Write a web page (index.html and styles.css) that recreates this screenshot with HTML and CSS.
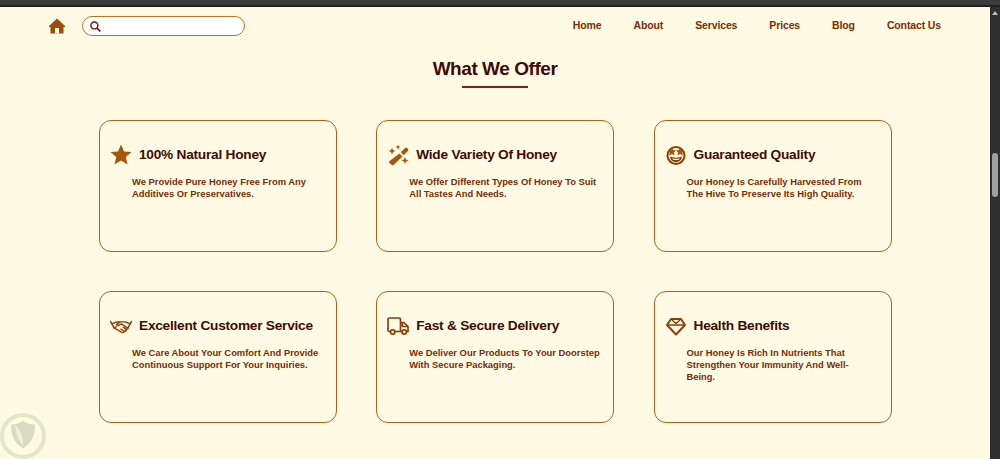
FILE: index.html
```html
<!DOCTYPE html>
<html lang="en">
<head>
    <meta charset="UTF-8">
    <meta name="viewport" content="width=device-width, initial-scale=1.0">
    <title>What We Offer</title>
    <link rel="stylesheet" href="styles.css">
</head>
<body>

    <div class="top-strip"></div>

    <div class="window">
        <div class="page">

            <!-- Navigation -->
            <nav class="navbar">
                <div class="nav-left">
                    <svg class="home-icon" viewBox="0 0 16 16" width="16" height="16">
                        <path fill="#9c4f0c" d="M8 .5 16 8v1h-1.500v6.500h-13V9H0V8L8 .5Z"/>
                        <rect x="6" y="10" width="4" height="5.500" fill="#fffae3"/>
                    </svg>
                    <div class="search-box">
                        <svg viewBox="0 0 12 12" width="11" height="11">
                            <circle cx="4.800" cy="4.800" r="3.800" fill="none" stroke="#7a1500" stroke-width="1.600"/>
                            <path d="M7.700 7.700 11.300 11.300" stroke="#7a1500" stroke-width="1.800"/>
                        </svg>
                    </div>
                </div>
                <ul class="nav-links">
                    <li><a href="#">Home</a></li>
                    <li><a href="#">About</a></li>
                    <li><a href="#">Services</a></li>
                    <li><a href="#">Prices</a></li>
                    <li><a href="#">Blog</a></li>
                    <li><a href="#">Contact Us</a></li>
                </ul>
            </nav>

            <h1 class="section-title">What We Offer</h1>
            <div class="title-line"></div>

            <!-- Offer cards -->
            <section class="offer-grid">
                <div class="offer-card">
                    <div class="offer-head">
                        <svg class="offer-icon" viewBox="0 0 22 22">
                            <path fill="#a6560f" d="M11 .5l3 6.900 7.500.7-5.700 4.900 1.700 7.500L11 16.600 4.500 20.500l1.700-7.500L.5 8.100 8 7.400 11 .5Z"/>
                        </svg>
                        <h3>100% Natural Honey</h3>
                    </div>
                    <p>We Provide Pure Honey Free From Any Additives Or Preservatives.</p>
                </div>

                <div class="offer-card">
                    <div class="offer-head">
                        <svg class="offer-icon" viewBox="0 0 22 22">
                            <path fill="#a6560f" d="M12.500 9.500l3 3-8.700 8.300a1.500 1.500 0 0 1-2.100 0L2.500 19a1.500 1.500 0 0 1 0-2.100l10-7.400Z"/>
                            <path fill="#a6560f" d="M13.800 8.300l4.300-4.200a1.500 1.500 0 0 1 2.100 0l.7.700a1.500 1.500 0 0 1 0 2.100l-4.200 4.300-2.900-2.900Z"/>
                            <path fill="#a6560f" d="M5 3.500l1 2.500 2.500 1-2.500 1L5 10.500 4 8 1.500 7l2.500-1 1-2.500ZM18 13l1 2.500 2.500 1-2.500 1-1 2.500-1-2.500-2.500-1 2.500-1 1-2.500ZM11 .5l.7 1.800 1.800.7-1.800.7-.7 1.800-.7-1.800L8.500 3l1.800-.7.700-1.800Z"/>
                        </svg>
                        <h3>Wide Variety Of Honey</h3>
                    </div>
                    <p>We Offer Different Types Of Honey To Suit All Tastes And Needs.</p>
                </div>

                <div class="offer-card">
                    <div class="offer-head">
                        <svg class="offer-icon" viewBox="0 0 22 22">
                            <circle cx="11" cy="11.500" r="8.500" fill="none" stroke="#8a3f0a" stroke-width="2"/>
                            <path fill="#a6560f" d="M6.800 3.500l1.400 2.600 2.800.4-2 2 .5 2.900-2.700-1.300-2.700 1.300.5-2.900-2-2 2.800-.4 1.400-2.600ZM15.200 3.500l1.400 2.600 2.800.4-2 2 .5 2.900-2.700-1.300-2.700 1.300.5-2.900-2-2 2.800-.4 1.400-2.600Z"/>
                            <path fill="#8a3f0a" d="M5 12.800c4 1.100 8 1.100 12 0-.4 3.400-3 5.400-6 5.400s-5.600-2-6-5.400Z"/>
                            <path fill="#fffae3" d="M7.200 14.500c2.500.4 5.100.4 7.600 0-.6 1-1.400 1.500-2.200 1.600H9.400c-.8-.1-1.600-.6-2.200-1.600Z"/>
                        </svg>
                        <h3>Guaranteed Quality</h3>
                    </div>
                    <p>Our Honey Is Carefully Harvested From The Hive To Preserve Its High Quality.</p>
                </div>

                <div class="offer-card">
                    <div class="offer-head">
                        <svg class="offer-icon" viewBox="0 0 22 22">
                            <g transform="translate(0 2.500) scale(1 .78)">
                                <path fill="none" stroke="#8a3f0a" stroke-width="1.700" stroke-linejoin="round" stroke-linecap="round" d="M.5 5l3.800 8.500 7.200 5.500c1.300.9 2.900-.2 2.500-1.500 1.600.5 2.800-1 2-2.300 1.300.2 2-1.100 1.500-2.200M21.500 5l-3.700 8.500"/>
                                <path fill="none" stroke="#8a3f0a" stroke-width="1.700" stroke-linejoin="round" stroke-linecap="round" d="M3 7.500l4-2h3.500L6.500 9c1 1.400 2.600 1.100 3.900 0l1.100-.8 6.300 5.500M19 7.500l-4-2h-4.500M4.300 13.500l2-1.800M13.500 17l-2.500-2M16 15l-2.500-2.200"/>
                            </g>
                        </svg>
                        <h3>Excellent Customer Service</h3>
                    </div>
                    <p>We Care About Your Comfort And Provide Continuous Support For Your Inquiries.</p>
                </div>

                <div class="offer-card">
                    <div class="offer-head">
                        <svg class="offer-icon" viewBox="0 0 22 22">
                            <path fill="none" stroke="#8a3f0a" stroke-width="1.700" stroke-linejoin="round" d="M3.500 16.500H2.500A1.500 1.500 0 0 1 1 15V4.500A1.500 1.500 0 0 1 2.500 3h9.500A1.500 1.500 0 0 1 13.500 4.500v12H8M13.500 7.500h3.500l4 4v5h-1.500M13.500 16.500h1.500M15.500 7.500v4H21"/>
                            <circle cx="5.700" cy="17" r="2.200" fill="none" stroke="#8a3f0a" stroke-width="1.700"/>
                            <circle cx="17.200" cy="17" r="2.200" fill="none" stroke="#8a3f0a" stroke-width="1.700"/>
                        </svg>
                        <h3>Fast &amp; Secure Delivery</h3>
                    </div>
                    <p>We Deliver Our Products To Your Doorstep With Secure Packaging.</p>
                </div>

                <div class="offer-card">
                    <div class="offer-head">
                        <svg class="offer-icon" viewBox="0 0 22 22">
                            <path fill="none" stroke="#8a3f0a" stroke-width="2" stroke-linejoin="round" d="M6 4h10l4 6-9 9.500L2 10l4-6Z"/>
                            <path fill="none" stroke="#8a3f0a" stroke-width="1.400" stroke-linejoin="round" d="M7 5l4 3.500L15 5M3 10h16"/>
                        </svg>
                        <h3>Health Benefits</h3>
                    </div>
                    <p>Our Honey Is Rich In Nutrients That Strengthen Your Immunity And Well-<br>Being.</p>
                </div>
            </section>
        </div>

        <!-- Window scrollbar -->
        <div class="scrollbar">
            <div class="scroll-arrow"></div>
            <div class="scroll-thumb"></div>
        </div>
    </div>

    <!-- Faded site badge in the corner -->
    <div class="badge">
        <svg viewBox="0 0 46 46" width="46" height="46">
            <circle cx="23" cy="23" r="21" fill="none" stroke="#e1e8c6" stroke-width="4"/>
            <path fill="#d7dcc0" d="M23 8c4 2.500 8 3.500 12 3.500 0 9-2 18-12 24-10-6-12-15-12-24 4 0 8-1 12-3.500Z"/>
            <path fill="#eef0d8" d="M15 12c1 10 4 16 8 21 1-7-2-16-8-21Z"/>
        </svg>
    </div>

</body>
</html>
```

FILE: styles.css
```css
* {
    box-sizing: border-box;
}

html, body {
    height: 100%;
}

body {
    margin: 0;
    overflow: hidden;
    display: flex;
    flex-direction: column;
    background-color: #fffae3;
    font-family: "Liberation Sans", Arial, sans-serif;
    font-weight: bold;
}

.top-strip {
    height: 7px;
    background-color: #3b3b3b;
    border-bottom: 2px solid #222;
}

.window {
    flex: 1;
    display: flex;
    min-height: 0;
}

.page {
    flex: 1;
    min-width: 0;
}

.navbar {
    display: flex;
    align-items: center;
    justify-content: space-between;
    padding: 9px 49px 0;
    height: 29px;
}

.nav-left {
    display: flex;
    align-items: center;
    gap: 17px;
}

.home-icon {
    display: block;
    margin-bottom: 1px;
}

.search-box {
    width: 163px;
    height: 20px;
    display: flex;
    align-items: center;
    padding-left: 7px;
    background-color: #fff;
    border: 1px solid #b8742c;
    border-radius: 10px;
}

.nav-links {
    display: flex;
    gap: 32px;
    margin: 0 0 4px;
    padding: 0;
    list-style: none;
}

.nav-links a {
    color: #7a2c05;
    font-size: 10.500px;
    letter-spacing: -0.13px;
    text-decoration: none;
}

.section-title {
    margin: 21px 0 0;
    text-align: center;
    color: #3f0a02;
    font-size: 19px;
    letter-spacing: -0.45px;
    line-height: 24px;
}

.title-line {
    width: 66px;
    height: 2px;
    margin: 5px auto 0;
    background-color: #8b1a1a;
}

.offer-grid {
    display: grid;
    grid-template-columns: repeat(3, 238px);
    grid-auto-rows: 132px;
    column-gap: 39.250px;
    row-gap: 39px;
    margin: 32px 0 0 99px;
}

.offer-card {
    padding: 23px 12px 0 10px;
    border: 1px solid #a9651f;
    border-radius: 12px;
}

.offer-head {
    display: flex;
    align-items: center;
    gap: 7px;
}

.offer-icon {
    width: 22px;
    height: 22px;
    flex-shrink: 0;
}

.offer-head h3 {
    margin: 0;
    color: #3f0a02;
    font-size: 13.700px;
    letter-spacing: -0.25px;
    line-height: 20px;
}

.offer-card p {
    margin: 10px 0 0 22px;
    color: #7a2c05;
    font-size: 9.400px;
    line-height: 12px;
}

.scrollbar {
    width: 10px;
    padding: 4px 2px 0;
    background-color: #2e2e2e;
}

.scroll-arrow {
    width: 0;
    margin: 0 auto;
    border-left: 3px solid transparent;
    border-right: 3px solid transparent;
    border-bottom: 4px solid #bbb;
}

.scroll-thumb {
    height: 44px;
    margin-top: 138px;
    background-color: #a0a0a0;
    border-radius: 3px;
}

.badge {
    position: absolute;
    left: 0;
    bottom: 0;
    width: 46px;
    height: 46px;
}
```
